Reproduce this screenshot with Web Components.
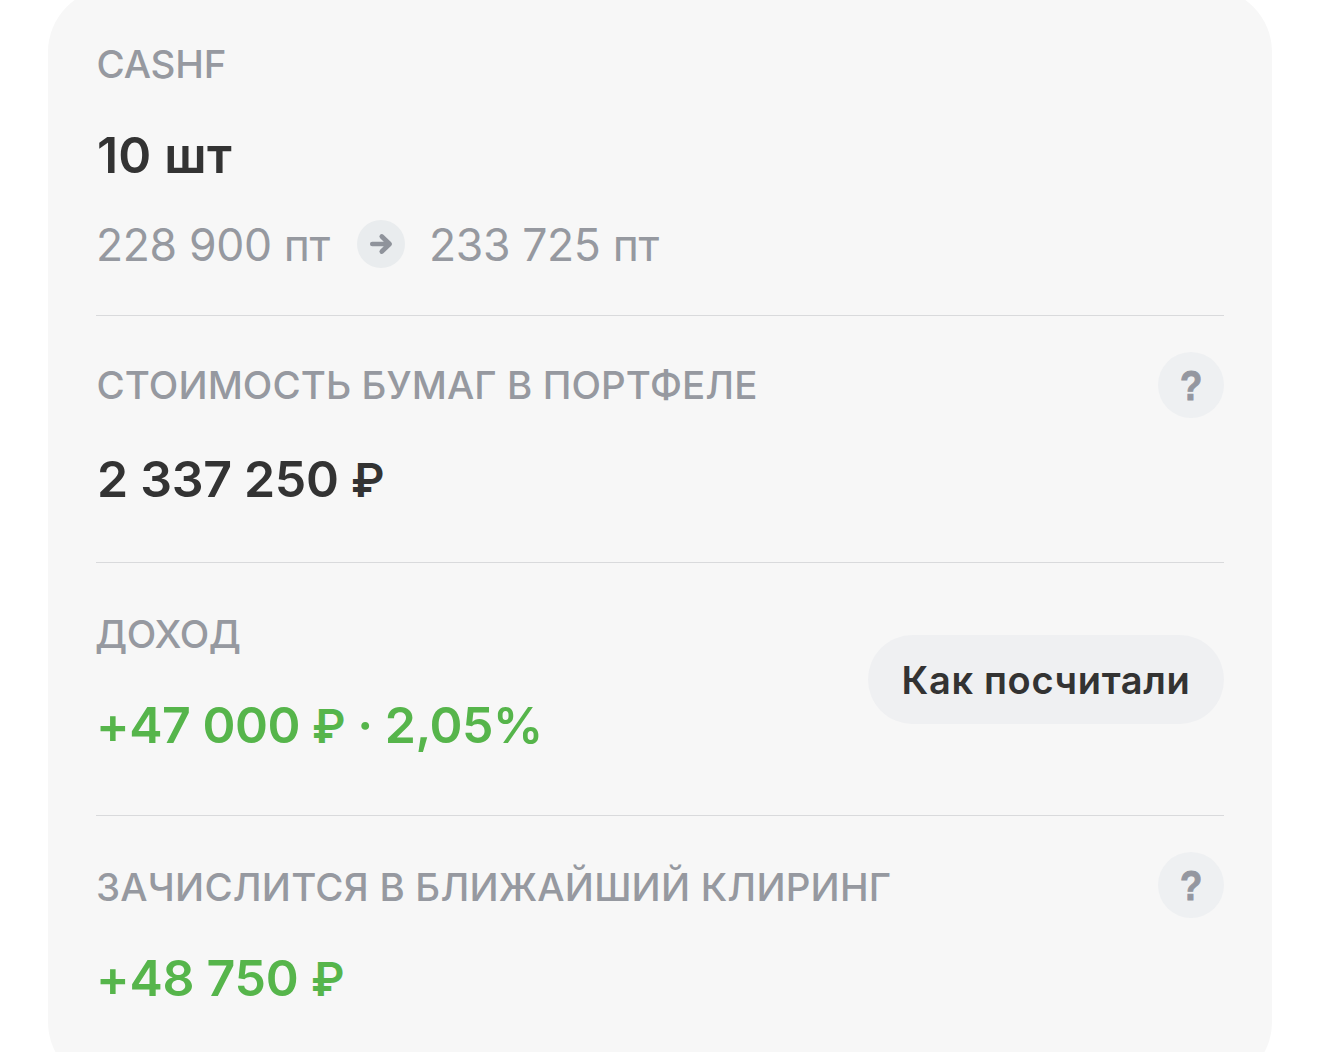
<!DOCTYPE html>
<html lang="ru">

<head>
    <meta charset="UTF-8" />
    <title>CASHF</title>
    <meta name="viewport" content="width=device-width, initial-scale=1" />

    <style>
        * {
            box-sizing: border-box;
        }

        html,
        body {
            height: 100%;
        }

        body {
            margin: 0;
            overflow: hidden;
            background: #fff;
            color: #333;
            font-family: Inter, "Liberation Sans", sans-serif;
        }

        /* Знаки валюты и процента чуть легче цифр */
        .sign {
            font-size: 46px;
            font-weight: 600;
        }

        .percent {
            font-weight: 580;
            letter-spacing: 0;
        }
    </style>
</head>

<body>
    <position-card>
        <position-row style="--top: 52px; --bottom: 43px; --gap: 37px">
            <span slot="label" style="letter-spacing: -0.2px">CASHF</span>
            <span slot="value" style="letter-spacing: 0.2px">10 шт</span>
            <price-change slot="details">
                <span slot="from">228 900 пт</span>
                <span slot="to">233 725 пт</span>
            </price-change>
        </position-row>
        <position-row style="--top: 45px; --bottom: 53px; --gap: 40px">
            <span slot="label" style="letter-spacing: 0.08px">СТОИМОСТЬ БУМАГ В ПОРТФЕЛЕ</span>
            <span slot="value" style="letter-spacing: -0.3px">2 337 250 <span class="sign">₽</span></span>
            <help-badge slot="action"></help-badge>
        </position-row>
        <position-row style="--bottom: 60px; --action-top: 72px; --shift: -1px">
            <span slot="label" style="letter-spacing: -0.3px">ДОХОД</span>
            <span slot="value" class="gain" style="letter-spacing: -0.48px">+47 000 <span class="sign">₽</span> · 2,05<span class="percent">%</span></span>
            <pill-button slot="action">Как посчитали</pill-button>
        </position-row>
        <position-row style="--shift: -1px">
            <span slot="label" style="letter-spacing: 0.2px; margin-left: 1px">ЗАЧИСЛИТСЯ В БЛИЖАЙШИЙ КЛИРИНГ</span>
            <span slot="value" class="gain" style="letter-spacing: -0.25px">+48 750 <span class="sign">₽</span></span>
            <help-badge slot="action"></help-badge>
        </position-row>
    </position-card>

    <script>
        // Базовый класс: рендерит стили и разметку в открытый shadow root
        class BaseElement extends HTMLElement {
            static css = '';
            static html = '<slot></slot>';

            static register(tag) {
                customElements.define(tag, this);
            }

            constructor() {
                super();
                const root = this.attachShadow({ mode: 'open' });
                root.innerHTML = `<style>* { box-sizing: border-box; } ${this.constructor.css}</style>${this.constructor.html}`;
            }
        }

        // Карточка, которая уходит за верхний и нижний край экрана
        class PositionCard extends BaseElement {
            static css = `
    :host {
      display: flex;
      flex-direction: column;
      box-sizing: border-box;
      height: 1098px;
      margin: -12px 48px 0;
      padding: 0 48px;
      border-radius: 64px;
      background: #f7f7f7;
    }
  `;
        }

        // Строка карточки: подпись, значение и действие справа
        class PositionRow extends BaseElement {
            static css = `
    :host {
      display: flex;
      justify-content: space-between;
      border-bottom: 1px solid #d9dadc;
    }
    :host(:last-child) {
      border-bottom: 0;
    }
    .text {
      display: flex;
      flex-direction: column;
      padding: var(--top, 47px) 0 var(--bottom, 0);
      white-space: nowrap;
    }
    .label {
      margin-left: var(--shift, 0.5px);
      font-size: 38.5px;
      font-weight: 450;
      line-height: 48px;
      color: #9699a0;
    }
    .value {
      height: 60px;
      margin-top: var(--gap, 37px);
      margin-left: var(--shift, 0);
      padding-left: 1px;
      font-size: 50px;
      font-weight: 600;
      line-height: 60px;
    }
    ::slotted(.gain) {
      color: #56b54b;
    }
    .action {
      padding-top: var(--action-top, 36px);
    }
  `;
            static html = `
    <div class="text">
      <div class="label"><slot name="label"></slot></div>
      <div class="value"><slot name="value"></slot></div>
      <slot name="details"></slot>
    </div>
    <div class="action"><slot name="action"></slot></div>
  `;
        }

        // Изменение цены: было → стало
        class PriceChange extends BaseElement {
            static css = `
    :host {
      display: flex;
      align-items: center;
      height: 56px;
      margin-top: 31px;
      font-size: 44.5px;
      line-height: 56px;
      letter-spacing: -0.35px;
      color: #9699a0;
    }
    ::slotted(span) {
      padding-top: 1px;
    }
    svg {
      display: block;
      margin: 0 24px 0 27px;
    }
  `;
            static html = `
    <slot name="from"></slot>
    <svg width="48" height="48" viewBox="0 0 48 48" fill="none">
      <circle cx="24" cy="24" r="24" fill="#e9ecee" />
      <path d="M15.3 24H32.3M24.8 16.5L32.6 24L24.8 31.5" stroke="#8f939b" stroke-width="4.7" stroke-linecap="round" stroke-linejoin="round" />
    </svg>
    <slot name="to"></slot>
  `;
        }

        // Круглая подсказка
        class HelpBadge extends BaseElement {
            static css = `
    :host {
      display: flex;
      align-items: center;
      justify-content: center;
      width: 66px;
      height: 66px;
      border-radius: 50%;
      background: #eef0f2;
      color: #9497a0;
      font-family: "Liberation Sans", sans-serif;
      font-size: 43px;
      font-weight: 700;
      line-height: 66px;
    }
    span {
      transform: scaleX(0.85);
      -webkit-text-stroke: 1px currentColor;
    }
  `;
            static html = '<span>?</span>';
        }

        // Кнопка-пилюля
        class PillButton extends BaseElement {
            static css = `
    :host {
      display: flex;
      align-items: center;
      justify-content: center;
      width: 356px;
      height: 89px;
      border-radius: 45px;
      background: #eff0f2;
      font-size: 38px;
      font-weight: 580;
      letter-spacing: 0.65px;
      white-space: nowrap;
      cursor: pointer;
    }
  `;
        }

        PositionCard.register('position-card');
        PositionRow.register('position-row');
        PriceChange.register('price-change');
        HelpBadge.register('help-badge');
        PillButton.register('pill-button');
    </script>
</body>

</html>
